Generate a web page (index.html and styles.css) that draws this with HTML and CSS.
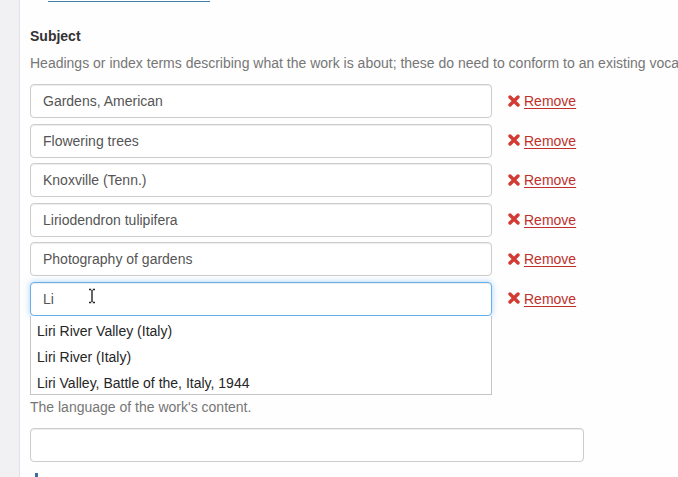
FILE: index.html
```html
<!DOCTYPE html>
<html>
<head>
<meta charset="utf-8">
<link rel="stylesheet" href="styles.css">
</head>
<body>
<div class="page">
  <aside class="sidebar"></aside>
  <main class="main">
    <div class="top-link"></div>
    <div class="field">
      <label class="field-label">Subject</label>
      <p class="help">Headings or index terms describing what the work is about; these do need to conform to an existing vocabulary.</p>
      <div class="rows">
        <div class="row"><input class="input" type="text" value="Gardens, American"><a class="remove" href="#"><svg class="x" viewBox="0 0 12 12"><path d="M2 2L10 10M10 2L2 10"/></svg><span>Remove</span></a></div>
        <div class="row"><input class="input" type="text" value="Flowering trees"><a class="remove" href="#"><svg class="x" viewBox="0 0 12 12"><path d="M2 2L10 10M10 2L2 10"/></svg><span>Remove</span></a></div>
        <div class="row"><input class="input" type="text" value="Knoxville (Tenn.)"><a class="remove" href="#"><svg class="x" viewBox="0 0 12 12"><path d="M2 2L10 10M10 2L2 10"/></svg><span>Remove</span></a></div>
        <div class="row"><input class="input" type="text" value="Liriodendron tulipifera"><a class="remove" href="#"><svg class="x" viewBox="0 0 12 12"><path d="M2 2L10 10M10 2L2 10"/></svg><span>Remove</span></a></div>
        <div class="row"><input class="input" type="text" value="Photography of gardens"><a class="remove" href="#"><svg class="x" viewBox="0 0 12 12"><path d="M2 2L10 10M10 2L2 10"/></svg><span>Remove</span></a></div>
        <div class="row active">
          <div class="ac-wrap">
            <input class="input focus" type="text" value="Li">
            <svg class="ibeam" viewBox="0 0 8 16"><path d="M1 1.5h2.2M4.8 1.5H7M4 2v12M1 14.5h2.2M4.8 14.5H7"/></svg>
            <ul class="menu">
              <li>Liri River Valley (Italy)</li>
              <li>Liri River (Italy)</li>
              <li>Liri Valley, Battle of the, Italy, 1944</li>
            </ul>
          </div>
          <a class="remove" href="#"><svg class="x" viewBox="0 0 12 12"><path d="M2 2L10 10M10 2L2 10"/></svg><span>Remove</span></a>
        </div>
      </div>
    </div>
    <div class="field lang">
      <p class="help">The language of the work's content.</p>
      <input class="input wide" type="text" value="">
    </div>
    <div class="next-mark"></div>
  </main>
</div>
</body>
</html>
```
FILE: styles.css
```css
html, body {
  margin: 0;
  padding: 0;
  background: #fefefe;
  overflow: hidden;
  height: 477px;
}
body {
  font-family: "Liberation Sans", Arial, sans-serif;
  font-size: 14px;
  color: #333;
}
.page {
  display: flex;
  min-height: 477px;
}
.sidebar {
  flex: 0 0 19px;
  background: #f1f0f3;
  border-right: 1px solid #e3e2e6;
}
.main {
  flex: 0 0 auto;
  width: 648px;
  padding-left: 10px;
  overflow: hidden;
}
.top-link {
  margin-left: 18px;
  width: 162px;
  height: 1px;
  border-bottom: 1px solid #3f7fa8;
}
.field-label {
  display: block;
  font-weight: bold;
  line-height: 20px;
  margin-top: 24px;
  color: #333;
}
.help {
  margin: 7px 0 0;
  line-height: 20px;
  color: #767676;
  white-space: nowrap;
  overflow: hidden;
}
.rows {
  margin-top: 11px;
  display: flex;
  flex-direction: column;
  gap: 5.6px;
}
.row {
  display: flex;
  align-items: center;
}
.input {
  box-sizing: border-box;
  width: 462px;
  height: 34px;
  padding: 6px 12px;
  border: 1px solid #ccc;
  border-radius: 4px;
  background: #fff;
  font-family: "Liberation Sans", Arial, sans-serif;
  font-size: 14px;
  color: #555;
  box-shadow: inset 0 1px 1px rgba(0,0,0,.075);
  outline: none;
  margin: 0;
}
.input.focus {
  border-color: #66afe9;
  box-shadow: inset 0 1px 1px rgba(0,0,0,.075), 0 0 6px rgba(102,175,233,.55);
}
.remove {
  display: flex;
  align-items: center;
  margin-left: 16px;
  color: #c0302b;
  text-decoration: none;
}
.remove span {
  text-decoration: underline;
  text-underline-offset: 2px;
  margin-left: 4px;
  line-height: 20px;
}
.x {
  width: 12px;
  height: 12px;
  margin-top: -1px;
}
.x path {
  stroke: #d23a33;
  stroke-width: 3.4;
  stroke-linecap: round;
  fill: none;
}
.ac-wrap {
  position: relative;
  width: 462px;
  height: 34px;
}
.ibeam {
  position: absolute;
  left: 58px;
  top: 6px;
  width: 8px;
  height: 16px;
}
.ibeam path {
  stroke: #222;
  stroke-width: 1.4;
  fill: none;
}
.menu {
  position: absolute;
  left: 0;
  top: 34px;
  z-index: 5;
  box-sizing: border-box;
  width: 462px;
  margin: 0;
  padding: 0;
  list-style: none;
  background: #fff;
  border: 1px solid #c5c5c5;
  border-top: none;
}
.menu li {
  box-sizing: border-box;
  height: 26px;
  padding: 2px 6px 0;
  line-height: 26px;
  color: #262626;
  white-space: nowrap;
}
.lang .help {
  margin-top: 81px;
}
.input.wide {
  width: 554px;
  margin-top: 11px;
}
.next-mark {
  margin: 11px 0 0 5px;
  width: 3px;
  height: 4px;
  background: #3a6fa0;
}
```
